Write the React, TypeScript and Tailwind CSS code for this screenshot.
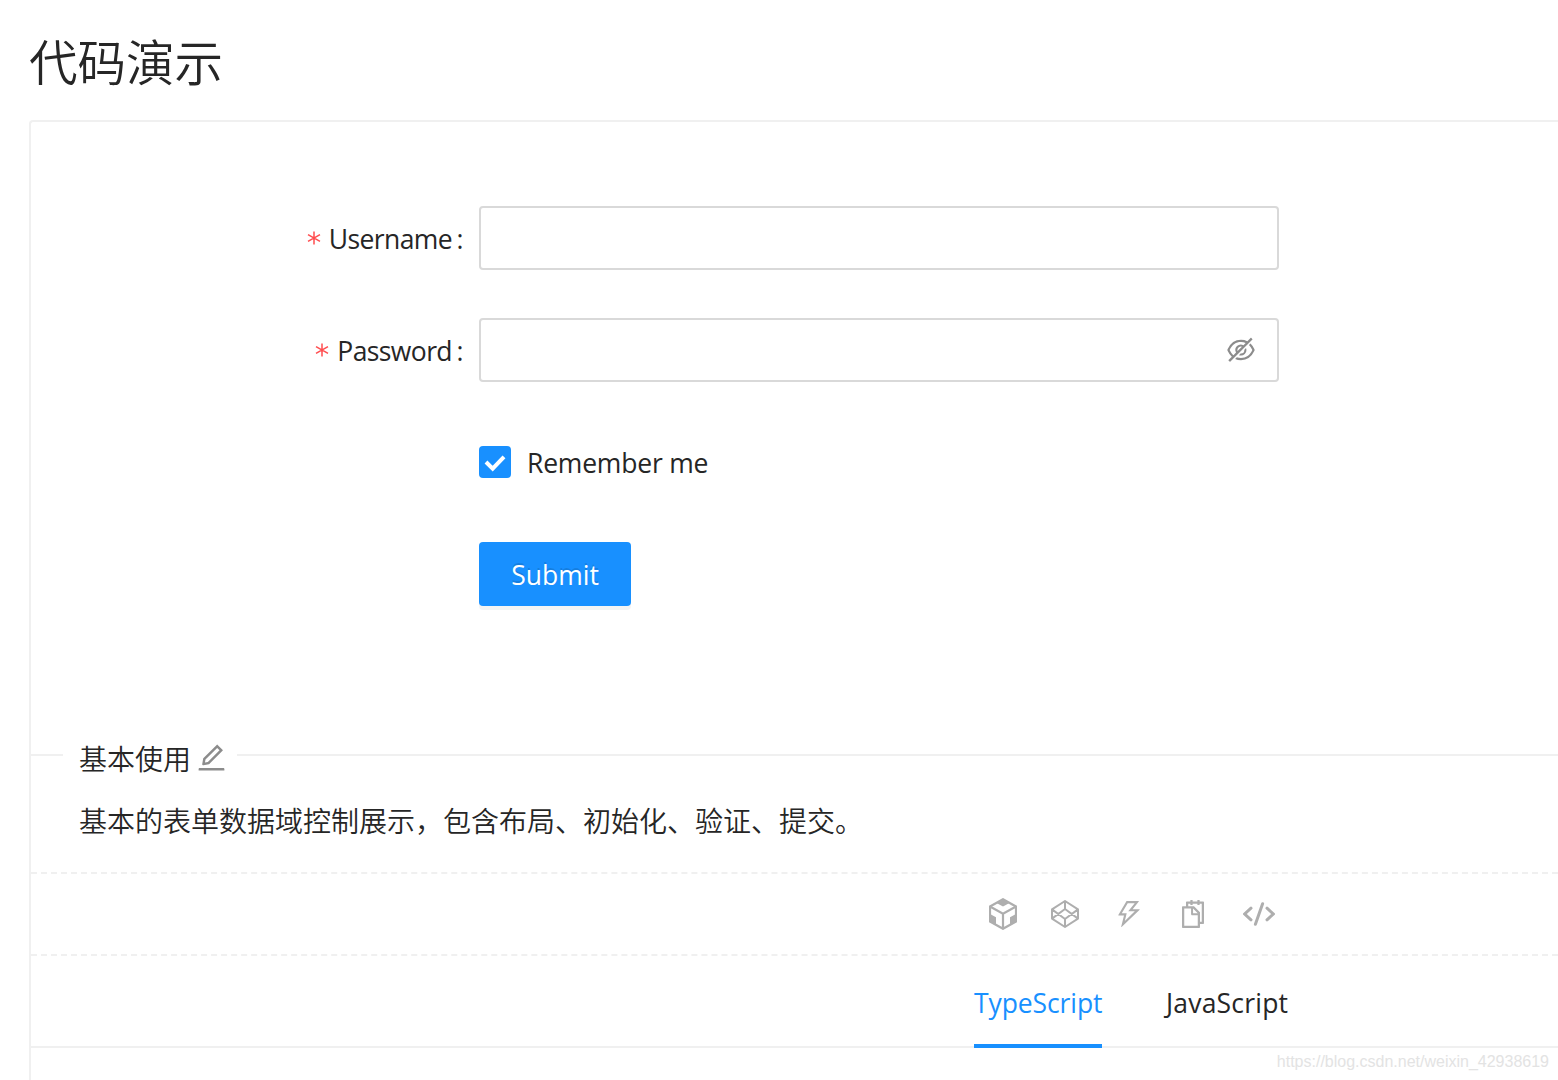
import { useState } from 'react'
import type { ReactNode } from 'react'
import { AiOutlineEdit, AiOutlineEyeInvisible, AiOutlineSnippets, AiOutlineThunderbolt } from 'react-icons/ai'

interface FormRowProps {
    label?: string
    children: ReactNode
}

function FormRow({ label, children }: FormRowProps) {
    return (
        <div className="flex h-16 items-center">
            <div className="flex w-[448px] shrink-0 items-center justify-end pr-[15px]">
                {label && (
                    <>
                        <svg className="mr-2 text-[#ff4d4f]" width="14" height="28" viewBox="0 0 14 28" fill="none" stroke="currentColor" strokeWidth="1.5">
                            <path d="M7 7.5v13M1 10.6l12 6.8M13 10.6l-12 6.8" />
                        </svg>
                        <label className="pt-0.5 tracking-[-0.6px]">{label}</label>
                        <span className="ml-1 w-2 pt-0.5 text-center">:</span>
                    </>
                )}
            </div>
            {children}
        </div>
    )
}

function SandboxIcon() {
    return (
        <svg width="28" height="32" viewBox="0 0 28 32" fill="none" stroke="currentColor" strokeWidth="2.2">
            <path d="M14 1.2 27 8.5v15L14 30.8 1 23.5v-15zM1 8.5l13 7.3 13-7.3M14 15.8v15" />
            <path d="M7.5 5 14 1.2 20.5 5 14 8.6zM1 16l6 3.2v7.4l-6-3.3zM27 16l-6 3.2v7.4l6-3.3z" fill="currentColor" stroke="none" />
        </svg>
    )
}

function CodepenIcon() {
    return (
        <svg width="28" height="28" viewBox="0 0 28 28" fill="none" stroke="currentColor" strokeWidth="2" strokeLinejoin="round">
            <path d="M14 1 27 9.4v9.2L14 27 1 18.6V9.4zM14 1v8M14 19v8M1 9.4 14 19l13-9.6M1 18.6 14 9l13 9.6" />
        </svg>
    )
}

function CodeIcon() {
    return (
        <svg width="32" height="24" viewBox="0 0 32 24" fill="none" stroke="currentColor" strokeWidth="3" strokeLinecap="round">
            <path d="M8 6.2 1.7 12 8 17.8M24 6.2l6.3 5.8-6.3 5.8M19.6 1.7l-7.2 20.6" />
        </svg>
    )
}

export default function App() {
    const [remember, setRemember] = useState(true)
    const [tab, setTab] = useState('TypeScript')

    return (
        <div className="relative h-[1080px] w-[1558px] overflow-hidden bg-white pl-[29px] font-['Open_Sans','Noto_Sans_CJK_SC',sans-serif] text-[26.5px] leading-[44px] text-[#262626]">
            <h2 className="flex h-[120px] items-center font-['Noto_Sans_CJK_SC',sans-serif] text-[48.5px] leading-[64px] font-[350]">代码演示</h2>

            <div className="h-[960px] rounded-tl-[4px] border-t-2 border-l-2 border-[#f0f0f0]">
                <form className="flex h-[632px] flex-col pt-[84px]">
                    <FormRow label="Username">
                        <input className="h-16 w-[800px] rounded-[4px] border-2 border-[#d9d9d9] px-5 outline-none" />
                    </FormRow>
                    <div className="h-12" />
                    <FormRow label="Password">
                        <div className="flex h-16 w-[800px] items-center rounded-[4px] border-2 border-[#d9d9d9] px-5">
                            <input type="password" className="h-full flex-1 outline-none" />
                            <AiOutlineEyeInvisible className="h-8 w-8 text-[#8c8c8c]" />
                        </div>
                    </FormRow>
                    <div className="h-12" />
                    <FormRow>
                        <label className="flex items-center">
                            <button
                                type="button"
                                onClick={() => setRemember(!remember)}
                                className="flex h-8 w-8 items-center justify-center rounded-[4px] bg-[#1890ff] text-white"
                            >
                                {remember && (
                                    <svg width="32" height="32" viewBox="0 0 32 32" fill="none" stroke="currentColor" strokeWidth="4">
                                        <path d="m7 16 6.7 6.7L25 10.8" />
                                    </svg>
                                )}
                            </button>
                            <span className="pt-0.5 pl-4 tracking-[-0.2px]">Remember me</span>
                        </label>
                    </FormRow>
                    <div className="h-12" />
                    <FormRow>
                        <button
                            type="button"
                            className="h-16 w-[152px] rounded-[4px] bg-[#1890ff] pt-0.5 text-white shadow-[0_4px_0_rgba(0,0,0,0.045)] [text-shadow:0_-2px_0_rgba(0,0,0,0.12)]"
                        >
                            Submit
                        </button>
                    </FormRow>
                </form>

                {/* Description */}
                <div className="-mt-[21px] h-[139px] font-['Noto_Sans_CJK_SC',sans-serif] text-[28px] font-[350]">
                    <div className="flex h-11 items-center">
                        <div className="h-0.5 w-8 bg-[#f0f0f0]" />
                        <span className="pt-1.5 pl-4">基本使用</span>
                        <AiOutlineEdit className="mt-[5px] ml-1 h-[33px] w-[33px] text-[#8c8c8c]" />
                        <div className="ml-[9px] h-0.5 flex-1 bg-[#f0f0f0]" />
                    </div>
                    <p className="pt-[21px] pl-12">基本的表单数据域控制展示，包含布局、初始化、验证、提交。</p>
                </div>

                {/* Actions */}
                <div className="flex h-[82px] items-center border-t-2 border-dashed border-[#f0f0f0] pl-[958px] text-[#aeaeae]">
                    <SandboxIcon />
                    <span className="ml-[34px]"><CodepenIcon /></span>
                    <AiOutlineThunderbolt className="ml-[34px] h-8 w-8" />
                    <AiOutlineSnippets className="ml-8 h-8 w-8" />
                    <span className="ml-[34px]"><CodeIcon /></span>
                </div>

                <div className="flex h-[94px] border-t-2 border-b-2 border-t-[#f0f0f0] border-b-[#f0f0f0] pl-[943px] [border-top-style:dashed]">
                    {['TypeScript', 'JavaScript'].map((name) => (
                        <button
                            key={name}
                            onClick={() => setTab(name)}
                            className={`mr-16 -mb-0.5 w-32 border-b-4 pt-[5px] text-left whitespace-nowrap ${tab === name ? 'border-[#1890ff] tracking-[-0.1px] text-[#1890ff]' : 'border-transparent tracking-[0.2px]'}`}
                        >
                            {name}
                        </button>
                    ))}
                </div>
            </div>

            <span className="absolute right-[9px] bottom-2 font-['Liberation_Sans',sans-serif] text-[16px] leading-5 text-[#e3e3e3]">
                https://blog.csdn.net/weixin_42938619
            </span>
        </div>
    )
}
